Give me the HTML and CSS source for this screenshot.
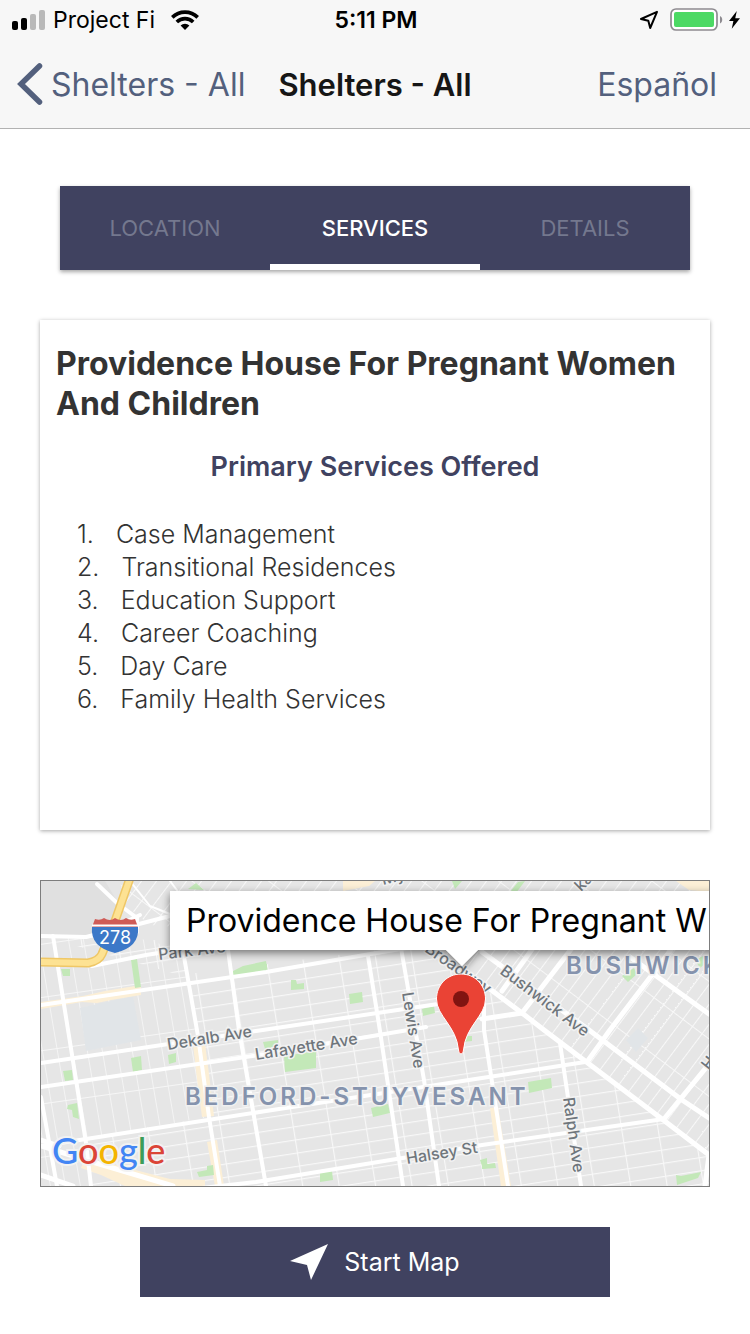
FILE: index.html
```html
<!DOCTYPE html>
<html lang="en">
<head>
<meta charset="utf-8">
<meta name="viewport" content="width=device-width, initial-scale=1">
<title>Shelters - All</title>
<link rel="stylesheet" href="styles.css">
</head>
<body>
<header class="top">
  <div class="status">
    <div class="status-side">
      <svg class="signal" viewBox="0 0 33 20" aria-hidden="true"><rect x="0" y="11" width="6" height="9" rx="2"/><rect x="9" y="8" width="6" height="12" rx="2"/><g fill="#b9b9b9"><rect x="18" y="4" width="6" height="16" rx="2"/><rect x="27" y="0" width="6" height="20" rx="2"/></g></svg>
      <span class="carrier">Project Fi</span>
      <svg class="wifi" viewBox="0 0 28 20" aria-hidden="true"><g fill="none" stroke="#000" stroke-width="3.6"><path d="M1.3 7.4a18 18 0 0 1 25.4 0"/><path d="M5.8 12a11.6 11.6 0 0 1 16.4 0"/></g><path d="M14 20l-4.4-4.4a6.2 6.2 0 0 1 8.800 0z"/></svg>
    </div>
    <time class="clock">5:11 PM</time>
    <div class="status-side status-end">
      <svg class="locate" viewBox="0 0 20 20" aria-hidden="true"><path d="M18 1.800L2 9l7.300 1.800L11.200 18z" fill="none" stroke="#000" stroke-width="2" stroke-linejoin="round"/></svg>
      <svg class="battery" viewBox="0 0 54 24" aria-hidden="true"><rect x="1" y="1" width="46" height="21" rx="5" fill="#fff" stroke="#8e8b90" stroke-width="1.700"/><rect x="4" y="4" width="40" height="15" rx="2" fill="#4cd964"/><path d="M50 8c3 1.500 3 6 0 7.500z" fill="#8e8b90"/></svg>
      <svg class="bolt" viewBox="0 0 12 20" aria-hidden="true"><path d="M8.500 0L0 11h4.800L3 19.500 12 8H6.800z"/></svg>
    </div>
  </div>
  <nav class="nav">
    <button class="nav-btn" type="button">
      <svg class="chevron" viewBox="0 0 26 42" aria-hidden="true"><path d="M22.500 3L4 21l18.500 18" fill="none" stroke="currentColor" stroke-width="5.500" stroke-linecap="round" stroke-linejoin="miter"/></svg>
      Shelters - All
    </button>
    <h1 class="nav-title">Shelters - All</h1>
    <button class="nav-btn nav-lang" type="button">Español</button>
  </nav>
</header>

<main class="page">
  <div class="tabs" role="tablist">
    <button class="tab" role="tab" aria-selected="false" type="button">LOCATION</button>
    <button class="tab tab-on" role="tab" aria-selected="true" type="button">SERVICES</button>
    <button class="tab" role="tab" aria-selected="false" type="button">DETAILS</button>
  </div>

  <section class="card">
    <h2 class="card-title">Providence House For Pregnant Women And Children</h2>
    <h3 class="card-sub">Primary Services Offered</h3>
    <ol class="list">
      <li><span>1.</span><span>Case Management</span></li>
      <li><span>2.</span><span>Transitional Residences</span></li>
      <li><span>3.</span><span>Education Support</span></li>
      <li><span>4.</span><span>Career Coaching</span></li>
      <li><span>5.</span><span>Day Care</span></li>
      <li><span>6.</span><span>Family Health Services</span></li>
    </ol>
  </section>

  <section class="map" aria-label="Map">
    <svg class="map-art" viewBox="41 881 668 305" preserveAspectRatio="xMidYMid slice">
      <defs>
        <pattern id="blocks" width="36" height="13" patternUnits="userSpaceOnUse" patternTransform="matrix(.988 -.152 .16 1 228 950)"><path d="M0 0H36M0 0V13" stroke="#f8f8f8" stroke-width="2.200"/></pattern>
        <pattern id="narrow" width="14.800" height="52" patternUnits="userSpaceOnUse" patternTransform="matrix(.988 -.14 .17 1 68 940)"><path d="M0 0H15M0 0V52" stroke="#f6f6f6" stroke-width="1.800"/></pattern>
        <pattern id="diag" width="46" height="11.500" patternUnits="userSpaceOnUse" patternTransform="matrix(.8 .6 -.6 .8 522 1013)"><path d="M0 0H46" stroke="none"/></pattern>
        <pattern id="avenues" width="46" height="12" patternUnits="userSpaceOnUse" patternTransform="matrix(-.6 .8 .8 .6 522 1013)"><path d="M0 0H46M0 0V12" stroke="#f8f8f8" stroke-width="1.900"/></pattern>
        <filter id="soft" x="-10%" y="-30%" width="120%" height="160%"><feDropShadow dx="0" dy="3" stdDeviation="4" flood-color="#000" flood-opacity=".5"/></filter>
      </defs>
      <rect x="41" y="881" width="668" height="305" fill="#e6e6e6"/>
      <path d="M41 936H86L102 928V940H200L183 951L219 1186H709V1155L544 1030L420 945L180 975Z" fill="url(#blocks)"/>
      <path d="M41 936L115 932L183 950L209 1117L86 1138L91 1186H41Z" fill="url(#narrow)"/>
      <path d="M86 1138L209 1117L219 1186H93Z" fill="url(#blocks)"/>
      <path d="M120 881H709V1155L544 1030L420 945L150 925L125 905Z" fill="url(#avenues)"/>
      <path d="M41 881H105L117 901L112 922L86 936L41 935Z" fill="#e0e0e0"/>
      <path d="M80 1008L133 996L141 1040L86 1051Z" fill="#e1e5e8"/>
      <path d="M626 1040l12-12 10 10-12 14z" fill="#e1e5e8"/>
      <g fill="#fcefd6">
        <path d="M41 1002l42-6 22-5 36-6v10l-30 5-14 3-15-1-41 7z"/>
        <path d="M192 1036h12l5 38 5 42-12 1-5-38zM207 1142l10-2 7 46h-9z"/>
        <path d="M84 1160l28 4 58 15 35 1v6h-80l-24-11-20-7z"/>
        <path d="M343 881h32l-6 5-26 5zM676 881h33v11l-20-2z"/>
        <path d="M490 1108l8-1 13 79h-10z"/>
      </g>
      <g fill="#c3e8b8">
        <path d="M61 969h9v7h-7zM131 960l6-1 4 28-6 1zM233 971l10-5 23-5 2 11-35 5z"/>
        <path d="M188 889l8-6 8 7zM131 1058l10-2 1 14-9 2zM168 1055l8-2v9l-7 2zM63 1071l9-1 1 10-8 1zM68 1105l9-2 2 16-6-2-1-7-5-1z"/>
        <path d="M197 1172l10-2 0-4 6-1 1 10-15 2zM256 965l11-1v5l-11 2zM291 980l5 0 1 4 7-1v6l-13 1zM349 994l13-2 1 10-13 2zM422 1009l12-3 1 7-12 3z"/>
        <path d="M284 1056l32-5v17l-31 4zM263 1042l15-2v6l-13 3zM371 1108l17-4 2 9-17 4zM320 1173l12-2 1 9-13 2zM480 1160l7-2v10l-4 1z"/>
        <path d="M528 1082l23-4 1 10-23 5zM482 1161l6 3 7-1 1 5-14 1zM676 1175l5 1 20-4-3 6-21 7zM462 1036h10v5l-9 1zM622 976l12-8 3 6-9 8zM510 892l8-10 7-1-9 12zM695 960l8-4 5 5-8 7zM452 881h10l-7 8z"/>
      </g>
      <g fill="none" stroke="#fff" stroke-linejoin="round" stroke-linecap="round">
        <g stroke-width="4">
          <path d="M41 936l45 1 53-13 31-8M92 966l54-11 44-7 240-24M41 1005l225-33 110-19 54-9M41 1063l215-32 182-27 44-7M41 1087l225-33 160-27"/>
          <path d="M41 1146l45-7 180-28 216-33 103-16M93 1200l163-18 226-37 182-26"/>
          <path d="M53 936l16 100 17 107 5 43M183 951l15 85 11 81 11 69M228 950l11 80 27 156M368 956l12 75 23 155M401 948l23 132 15 106M484 1000v30l24 156M560 1043l21 143M41 1097l16 89"/>
          <path d="M97 884l20 19 20 15v14M140 915l-25 12"/>
        </g>
        <g stroke-width="5">
          <path d="M418 942l64 41 40 30 22 17 118 89 47 36-4 31M482 952l107 78 93 70 27 18M630 957l79 57"/>
          <path d="M502 991l36-50M522 1013l60-78M587 1062l23-32 45-59 24-32M664 1119l45-55M482 1019l40-6"/>
          <path d="M41 1146l45 14 87 26M41 1175l32 11M41 1140l18 6"/>
        </g>
        <g stroke-width="2"><path d="M170 881l30 40M130 881l20 25 30 12"/></g>
      </g>
      <path d="M130 878l-16 46-12 30q-3 7-14 9l-50-1" fill="none" stroke="#efc766" stroke-width="9"/>
      <path d="M130 878l-16 46-12 30q-3 7-14 9l-50-1" fill="none" stroke="#fde293" stroke-width="6"/>

      <g class="street">
        <text x="159" y="960" transform="rotate(-7 159 960)">Park Ave</text>
        <text x="168" y="1050" transform="rotate(-9 168 1050)">Dekalb Ave</text>
        <text x="256" y="1060" transform="rotate(-9 256 1060)">Lafayette Ave</text>
        <text x="407" y="1164" transform="rotate(-9 407 1164)">Halsey St</text>
        <text x="402" y="993" transform="rotate(81 402 993)">Lewis Ave</text>
        <text x="563" y="1098" transform="rotate(82 563 1098)">Ralph Ave</text>
        <text x="499" y="973" transform="rotate(37 499 973)">Bushwick Ave</text>
        <text x="424" y="951" transform="rotate(35 424 951)">Broadway</text>
        <text x="383" y="885" transform="rotate(-14 383 885)">My</text>
        <text x="581" y="892" transform="rotate(-45 581 892)">ka</text>
        <text x="709" y="1071" transform="rotate(-52 709 1071)">H</text>
      </g>
      <g class="area">
        <text x="185" y="1105">BEDFORD-STUYVESANT</text>
        <text x="566" y="974">BUSHWICK</text>
      </g>

      <path d="M95 919q5 2 9-1 6 4 11 0 6 4 11 0 4 3 9 1l3 8H92z" fill="#cf5b57"/>
      <path d="M92 927h46q2 20-23 26-25-6-23-26z" fill="#3c78c8"/>
      <path d="M92 925.500h46" stroke="#fff" stroke-width="2"/>
      <text class="shield" x="115" y="944">278</text>

      <path d="M170 891H720V950H478L462 966L446 950H170Z" fill="#fff" filter="url(#soft)"/>
      <text class="callout" x="186" y="932">Providence House For Pregnant W</text>

      <path d="M461 974c-14 0-24.500 11-24.500 25 0 17 20 27 22 51q0 4 2.500 4t2.500-4c2-24 22-34 22-51 0-14-10.500-25-24.500-25z" fill="#ea4335" stroke="#fff" stroke-width="1"/>
      <circle cx="461" cy="999" r="8" fill="#811411"/>

      <text class="google" x="52" y="1164"><tspan fill="#4285f4">G</tspan><tspan fill="#db4437">o</tspan><tspan fill="#f4b400">o</tspan><tspan fill="#4285f4">g</tspan><tspan fill="#3c9d58">l</tspan><tspan fill="#db4437">e</tspan></text>
    </svg>
  </section>

  <button class="start" type="button">
    <svg class="start-icon" viewBox="0 0 38 36" aria-hidden="true"><path d="M38 0L0 17l17 4 4 15z" fill="#fff"/></svg>
    Start Map
  </button>
</main>
</body>
</html>
```
FILE: styles.css
```css
* { box-sizing: border-box; }
body {
  margin: 0;
  background: #fff;
  color: #333;
  font-family: Inter, "Liberation Sans", sans-serif;
}
button {
  border: 0;
  padding: 0;
  background: none;
  font: inherit;
  color: inherit;
  cursor: pointer;
}
svg { display: block; flex: none; }

.top { background: #f7f7f7; border-bottom: 1px solid #b2b2b2; }
.status {
  display: grid;
  grid-template-columns: 1fr auto 1fr;
  align-items: center;
  height: 40px;
  padding: 0 10px 0 12px;
  color: #000;
  font-size: 23px;
}
.status-side { display: flex; align-items: center; gap: 8px; }
.status-end { justify-content: flex-end; gap: 5px; }
.signal { width: 33px; }
.carrier { margin-right: 8px; }
.wifi { width: 28px; }
.clock { font-weight: 600; }
.locate { width: 20px; margin-right: 6px; }
.battery { width: 54px; }
.bolt { width: 11px; }

.nav {
  display: grid;
  grid-template-columns: 1fr auto 1fr;
  align-items: center;
  height: 88px;
  padding: 0 33px;
}
.nav-btn {
  display: flex;
  align-items: center;
  gap: 8px;
  margin-left: -16px;
  color: #53607d;
  font-size: 32px;
  white-space: nowrap;
}
.nav-lang { justify-self: end; }
.chevron { width: 26px; }
.nav-title { margin: 0; color: #161616; font-size: 31px; font-weight: 600; white-space: nowrap; }

.page { display: flex; flex-direction: column; padding: 57px 40px 37px; }
.tabs {
  display: grid;
  grid-template-columns: repeat(3, 1fr);
  height: 84px;
  margin: 0 20px;
  background: #404260;
  box-shadow: 0 2px 4px rgba(0, 0, 0, .35);
}
.tab {
  border-top: 6px solid transparent;
  border-bottom: 6px solid transparent;
  color: #74788e;
  font-size: 22px;
}
.tab-on { border-bottom-color: #fff; color: #fff; font-weight: 500; }

.card {
  min-height: 510px;
  margin-top: 50px;
  padding: 24px 16px;
  background: #fff;
  box-shadow: 0 1px 4px rgba(0, 0, 0, .35);
}
.card-title { margin: 0; font-size: 32px; line-height: 40px; font-weight: 700; }
.card-sub {
  margin: 23px 0 0;
  color: #404260;
  font-size: 27px;
  line-height: 40px;
  font-weight: 600;
  text-align: center;
}
.list {
  margin: 31px 0 0;
  padding: 0 0 0 21px;
  list-style: none;
  font-size: 25px;
  line-height: 33px;
  font-weight: 300;
}
.list li { display: flex; gap: 22px; }

.map { margin-top: 50px; border: 1px solid #7d7d7d; overflow: hidden; }
.map-art { width: 100%; height: auto; }
.street { fill: #6f767c; font-size: 16px; font-weight: 500; stroke: #f2f2f2; stroke-width: 3px; paint-order: stroke; }
.area { fill: #8593ad; font-size: 24px; font-weight: 600; letter-spacing: 3px; stroke: #f0f0f0; stroke-width: 3px; paint-order: stroke; }
.shield { fill: #fff; font-size: 18px; text-anchor: middle; }
.callout { fill: #000; font-size: 32px; }
.google { font-family: Lato, sans-serif; font-size: 36px; font-weight: 500; stroke: #f2f2f2; stroke-width: 4px; paint-order: stroke; }

.start {
  display: flex;
  align-items: center;
  justify-content: center;
  gap: 16px;
  height: 70px;
  margin: 40px 100px 0;
  background: #404260;
  color: #fff;
  font-size: 25px;
}
.start-icon { width: 38px; }
```
